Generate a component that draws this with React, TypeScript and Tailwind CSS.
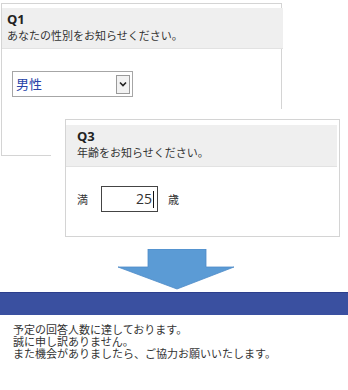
import React from "react";

const font = { fontFamily: '"Noto Sans CJK JP", "Noto Sans", sans-serif' };

function QuestionHeader({ no, text, className }: { no: string; text: string; className: string }) {
  return (
    <div className={`bg-[#efefef] border-b border-[#e2e2e2] ${className}`}>
      <div className="text-[13px] font-bold leading-[15px] text-[#222]" style={{ fontFamily: '"Open Sans", sans-serif' }}>
        {no}
      </div>
      <div className="text-[11px] leading-[16px] text-[#333]">{text}</div>
    </div>
  );
}

export default function App() {
  return (
    <div className="w-[348px] h-[390px] bg-white overflow-hidden" style={font}>
      {/* Q1 */}
      <div className="ml-[1px] mt-[3px] w-[281px] h-[153px] border border-[#d4d4d4] bg-white">
        <QuestionHeader no="Q1" text="あなたの性別をお知らせください。" className="mt-[4px] w-[281px] h-[41px] pl-[5px] pt-[4px]" />
        <div className="ml-[10px] mt-[22px] w-[121px] h-[26px] border border-[#a6a6a6] bg-white flex items-center justify-between pl-[3px] pr-[2px]">
          <span className="text-[13px] text-[#2743a8]">男性</span>
          <div className="w-[14px] h-[19px] border border-[#9a9a9a] bg-[#f2f2f2] flex items-center justify-center">
            <svg width="8" height="6" viewBox="0 0 8 6">
              <path d="M1 1.5 L4 4.5 L7 1.5" fill="none" stroke="#222" strokeWidth="1.6" />
            </svg>
          </div>
        </div>
      </div>

      {/* Q3 */}
      <div className="relative ml-[51px] -mt-[47px] w-[297px] bg-white pl-[14px] pt-[10px]">
        <div className="w-[275px] h-[118px] border border-[#d4d4d4] bg-white">
          <QuestionHeader no="Q3" text="年齢をお知らせください。" className="mt-[5px] mr-[2px] h-[42px] pl-[11px] pt-[4px]" />
          <div className="flex items-center mt-[19px] ml-[11px] text-[11px] text-[#333]">
            <span>満</span>
            <div className="ml-[13px] w-[57px] h-[26px] border border-[#444] flex items-center justify-end pr-[3px]">
              <span className="text-[14px] text-[#333] leading-none" style={{ fontFamily: '"Open Sans", sans-serif' }}>25</span>
              <span className="w-[1px] h-[17px] bg-[#111] ml-[1px]" />
            </div>
            <span className="ml-[10px]">歳</span>
          </div>
        </div>
      </div>

      {/* arrow */}
      <div className="h-[55px] pt-[12px]">
        <svg width="348" height="41" viewBox="0 249 348 41" className="block">
          <polygon
            points="148,249 206,249 206,267 234,267 177,289 118,267 148,267"
            fill="#5b9bd5"
            stroke="#4f8cc8"
            strokeWidth="0.8"
          />
        </svg>
      </div>

      {/* bar */}
      <div className="h-[23px] bg-[#3a50a0] border-t border-[#2c3e8c]" />

      <div className="pl-[13px] pt-[8px] text-[11px] leading-[12px] text-[#333]">
        <p>予定の回答人数に達しております。</p>
        <p>誠に申し訳ありません。</p>
        <p>また機会がありましたら、ご協力お願いいたします。</p>
      </div>
    </div>
  );
}
